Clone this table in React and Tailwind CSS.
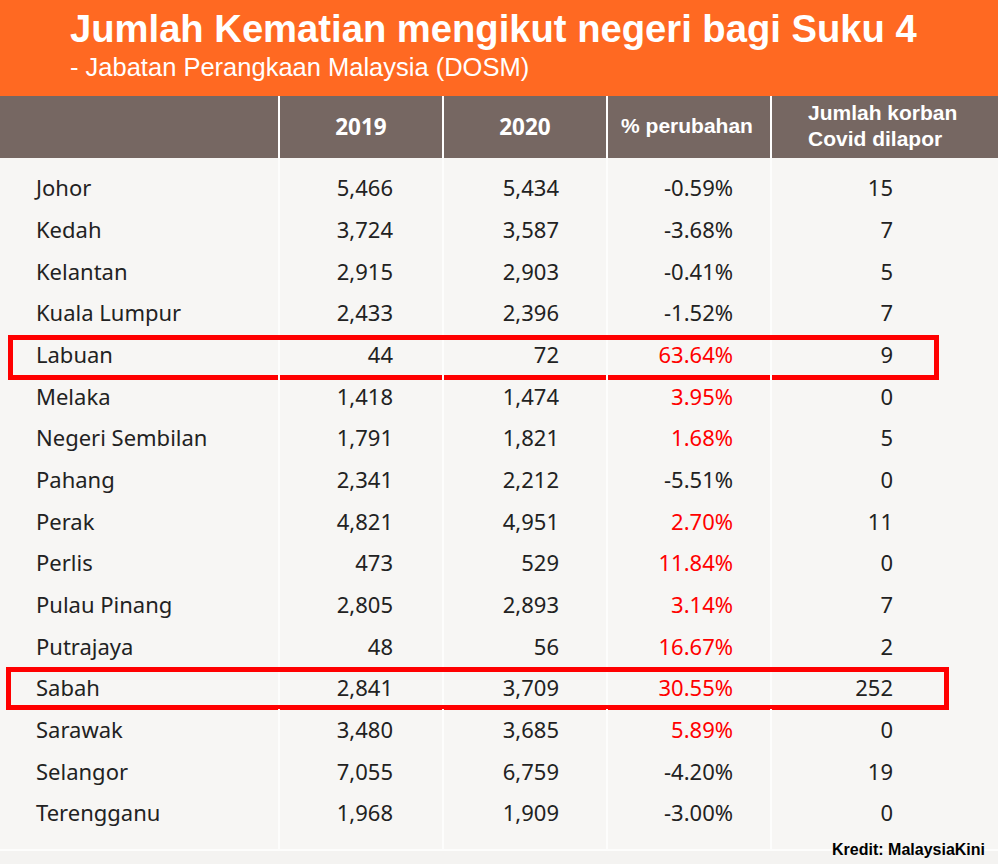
import React from "react";

const rows = [
  ["Johor", "5,466", "5,434", "-0.59%", "15", false],
  ["Kedah", "3,724", "3,587", "-3.68%", "7", false],
  ["Kelantan", "2,915", "2,903", "-0.41%", "5", false],
  ["Kuala Lumpur", "2,433", "2,396", "-1.52%", "7", false],
  ["Labuan", "44", "72", "63.64%", "9", true],
  ["Melaka", "1,418", "1,474", "3.95%", "0", true],
  ["Negeri Sembilan", "1,791", "1,821", "1.68%", "5", true],
  ["Pahang", "2,341", "2,212", "-5.51%", "0", false],
  ["Perak", "4,821", "4,951", "2.70%", "11", true],
  ["Perlis", "473", "529", "11.84%", "0", true],
  ["Pulau Pinang", "2,805", "2,893", "3.14%", "7", true],
  ["Putrajaya", "48", "56", "16.67%", "2", true],
  ["Sabah", "2,841", "3,709", "30.55%", "252", true],
  ["Sarawak", "3,480", "3,685", "5.89%", "0", true],
  ["Selangor", "7,055", "6,759", "-4.20%", "19", false],
  ["Terengganu", "1,968", "1,909", "-3.00%", "0", false],
];

const body = { fontFamily: '"Noto Sans", "Open Sans", sans-serif' };
const arial = { fontFamily: '"Liberation Sans", Arial, sans-serif' };

function Spacer({ h }) {
  return (
    <div className={`flex ${h}`}>
      <div className="w-[280px] border-r-2 border-[#fdfdfc]" />
      <div className="w-[164px] border-r-2 border-[#fdfdfc]" />
      <div className="w-[164px] border-r-2 border-[#fdfdfc]" />
      <div className="w-[164px] border-r-2 border-[#fdfdfc]" />
      <div className="flex-1" />
    </div>
  );
}

export default function App() {
  return (
    <div className="w-[998px] h-[864px] bg-[#f4f3f1] relative overflow-hidden">
      <div className="h-[96px] bg-[#ff6922] pl-[70px] pt-[6px] text-white" style={arial}>
        <div className="text-[38.2px] font-bold leading-[46px]">
          Jumlah Kematian mengikut negeri bagi Suku 4
        </div>
        <div className="text-[25.5px] leading-[30px]">- Jabatan Perangkaan Malaysia (DOSM)</div>
      </div>

      <div className="flex h-[62px] bg-[#766762] text-white font-bold">
        <div className="w-[280px] border-r-2 border-white" />
        <div
          className="w-[164px] border-r-2 border-white flex items-center justify-center text-[22.5px]"
          style={body}
        >
          2019
        </div>
        <div
          className="w-[164px] border-r-2 border-white flex items-center justify-center text-[22.5px]"
          style={body}
        >
          2020
        </div>
        <div
          className="w-[164px] border-r-2 border-white flex items-center justify-center text-[21px] pb-[3px] pr-[4px]"
          style={arial}
        >
          % perubahan
        </div>
        <div
          className="flex-1 flex flex-col justify-center pl-[36px] text-[21px] leading-[26px] pb-[3px]"
          style={arial}
        >
          <div>Jumlah korban</div>
          <div>Covid dilapor</div>
        </div>
      </div>

      <div className="bg-[#f7f6f4] text-[#222] text-[22px] border-b-2 border-[#fdfdfc]" style={body}>
        <Spacer h="h-[9px]" />
        {rows.map(([name, a, b, pct, c, red]) => (
          <div key={name} className="flex h-[41.67px] items-center relative">
            <div className="w-[280px] h-full border-r-2 border-[#fdfdfc] flex items-center pl-[36px]">
              {name}
            </div>
            <div className="w-[164px] h-full border-r-2 border-[#fdfdfc] flex items-center justify-end pr-[49px]">
              {a}
            </div>
            <div className="w-[164px] h-full border-r-2 border-[#fdfdfc] flex items-center justify-end pr-[47px]">
              {b}
            </div>
            <div
              className={`w-[164px] h-full border-r-2 border-[#fdfdfc] flex items-center justify-end pr-[37px] ${
                red ? "text-[#ff0000]" : ""
              }`}
            >
              {pct}
            </div>
            <div className="flex-1 h-full flex items-center justify-end pr-[105px]">{c}</div>
            {name === "Labuan" && (
              <div className="absolute left-[8px] top-[1px] w-[931px] h-[45px] border-[5px] border-[#ff0000]" />
            )}
            {name === "Sabah" && (
              <div className="absolute left-[6px] top-0 w-[943px] h-[43px] border-[5px] border-[#ff0000]" />
            )}
          </div>
        ))}
        <Spacer h="h-[15px]" />
      </div>

      <div
        className="absolute right-[13px] top-[840px] text-[16px] font-bold text-black leading-[20px]"
        style={arial}
      >
        Kredit: MalaysiaKini
      </div>
    </div>
  );
}
